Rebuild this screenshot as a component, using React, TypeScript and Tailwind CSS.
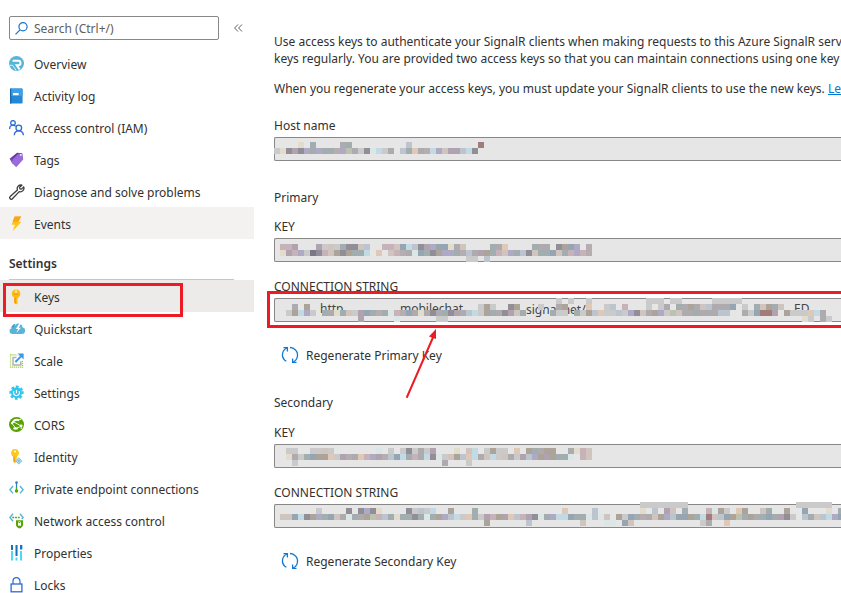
import type { ReactNode } from "react";

const palette: Record<string, string> = {
  a: "#b5adb0",
  b: "#adabad",
  c: "#cacacb",
  d: "#928e98",
  e: "#b1a2af",
  f: "#aea9c4",
  g: "#a2adaf",
  h: "#bcc4d0",
  i: "#c1dae4",
  j: "#dbe6e6",
  k: "#e1dccb",
  l: "#dfc9b6",
  m: "#d0c4be",
  n: "#96a5b2",
  o: "#bcc2ae",
  p: "#aca499",
  q: "#a17c7b",
  r: "#c8b2b9",
  s: "#7b7788",
};

type Row = { y: number; col: number; cells: string };
type Fragment = { x: number; y: number; text: string };

/* Pixelated strip that hides the value of a field; cells are 6px squares. */
function Mosaic({ rows, fragments = [] }: { rows: Row[]; fragments?: Fragment[] }) {
  return (
    <svg
      className="pointer-events-none absolute -top-1 left-0 h-8 w-[567px] max-w-none"
      viewBox="0 -4 567 32"
      aria-hidden="true"
    >
      {fragments.map((f) => (
        <text key={f.text} x={f.x} y={f.y} fontSize="12" fill="#444">
          {f.text}
        </text>
      ))}
      {rows.map((row) =>
        row.cells.split("").map((c, i) =>
          c === "." ? null : (
            <rect
              key={`${row.y}-${row.col + i}`}
              x={(row.col - 2 + i) * 6}
              y={row.y}
              width="6"
              height="6"
              fill={palette[c]}
              shapeRendering="crispEdges"
            />
          ),
        ),
      )}
    </svg>
  );
}

const hostRows: Row[] = [
  { y: 5, col: 2, cells: "....k.g....bg.........h...........q" },
  { y: 11, col: 2, cells: "ckdedfgfggafobcdjicb.hglbaifmeehid" },
];

const primaryKeyRows: Row[] = [
  { y: 6, col: 3, cells: "rre...ecmcgddmh..rrmnihdefnnkbm....gbl....gbb.dpnf.a" },
  { y: 12, col: 3, cells: "kerfcsdrmpdpggi.l.mrabjngdpffgahbepgrmfghdmggnmgrfra" },
  { y: 18, col: 34, cells: "cc.h" },
];

const primaryConnRows: Row[] = [
  { y: 0, col: 49, cells: "c.c..c.........ccc.cc.....ccccc" },
  { y: 6, col: 5, cells: "b.p............................cpc..dp...c..bp...l..ch.r...c.cb.gbpbmhbbbn.c.gmpgm" },
  { y: 12, col: 4, cells: "cpifc.gbkgmcengagjranbkbdbgdebhicpgbdemg....gcc.gcphlcchcfdmbpfcombbgbbbhh..bcnqqe.pccclib" },
  { y: 18, col: 90, cells: "kc.bc" },
  { y: 18, col: 16, cells: "e.....j......cc" },
];

const secondaryKeyRows: Row[] = [
  { y: 4, col: 4, cells: "cc..ccmc.......j.c.cdcbce...k.mi.cpcc.l.pgbpp..bkrm" },
  { y: 10, col: 4, cells: "kbcgnpplceablrfeahnigrbidjcmphlibmicmbcehfpepggj.rm" },
  { y: 16, col: 5, cells: "c........................b...c" },
];

const secondaryConnRows: Row[] = [
  { y: -2, col: 63, cells: "cccccccc..................cccccc" },
  { y: 4, col: 9, cells: "c....d.dfdk....dchci..p...g..............l....h.......k.h.em.g...rjpc.lp..mg..p..n...k.g" },
  {
    y: 10,
    col: 3,
    cells: "mmnidpfgnmbjgbporhgkggdgjgpfhiclgcerpelhredjgfiinggjhjm.pcngabmpfhnnpgiqmhnpogpbgngedc.hgmhifn",
  },
  { y: 16, col: 37, cells: "p......h........m...jj.nm...........cb..l" },
];

function SidebarIcon({ children }: { children: ReactNode }) {
  return (
    <svg viewBox="0 0 16 16" className="size-4 shrink-0" fill="none" aria-hidden="true">
      {children}
    </svg>
  );
}

const icons: Record<string, ReactNode> = {
  Overview: (
    <>
      <circle cx="7.5" cy="7.5" r="7.5" fill="#59b4d9" />
      <path d="M3.600 4.700h5.600a2.300 2.300 0 0 1 0 4.600H7.600l3 4.200" stroke="#fff" strokeWidth="1.900" />
      <path d="M.4 9.300h3.200l3.600 5.200" stroke="#fff" strokeWidth=".8" />
    </>
  ),
  "Activity log": (
    <>
      <rect x="1" y="0.5" width="12.6" height="15" rx="1" fill="#2488d8" />
      <rect x="1" y="0.5" width="1.4" height="15" fill="#1668b0" />
      <path d="M2.400.5h10.200a1 1 0 0 1 1 1V8H2.400z" fill="#3f9fe6" />
      <rect x="4" y="5" width="5.6" height="2.2" fill="#fff" />
    </>
  ),
  "Access control (IAM)": (
    <g stroke="#2a6bd4" strokeWidth="1.3">
      <circle cx="4" cy="2.9" r="2.3" />
      <path d="M0.600 9c0-2.300 1.400-3.800 3.400-3.800 1.200 0 2 .4 2.600 1.100" />
      <circle cx="9.8" cy="8" r="2.8" />
      <path d="M5.200 15.200c.2-2.700 1.800-4.400 4.600-4.400s4.400 1.700 4.600 4.400" />
    </g>
  ),
  Tags: (
    <>
      <path d="M.7 6.800 8 .8l5.400.5L5 12z" fill="#6a35ad" />
      <path d="M3.200 7.800 9.600 1.600l4 .2.6 5.800-7 7.600-4-4z" fill="#9b6ad8" />
      <path d="M.7 6.800 3.200 7.300v4.200z" fill="#8250c4" />
      <circle cx="11.8" cy="2.9" r=".9" fill="#fff" />
    </>
  ),
  "Diagnose and solve problems": (
    <path
      d="M11.700 1a3.600 3.600 0 0 0-3.300 4.900L1.200 12.600a1.500 1.500 0 0 0 2.200 2.200L10.200 7.600a3.600 3.600 0 0 0 4.500-4.700l-2.300 2.200-1.500-.3-.3-1.500L12.900 1.200A3.600 3.600 0 0 0 11.700 1z"
      stroke="#3b3b3b"
      strokeWidth="1.3"
      strokeLinejoin="round"
    />
  ),
  Events: (
    <>
      <path d="M5.600.5h6.600L9.400 5.800h3L3.600 15.300 6 8.800H2.600z" fill="#fcc419" />
      <path d="M5.600.5h6.600L9.400 5.800H3.700z" fill="#f9a420" />
    </>
  ),
  Keys: (
    <>
      <path d="M7 .4a4.300 4.300 0 0 1 2 8.100v1.300l-1.100 1 1.100 1-1 1 1 1L7.300 15.400 5.300 14V8.600A4.300 4.300 0 0 1 7 .4z" fill="#fbbc13" />
      <path d="M5.300 8.600h1.600v6.200L5.300 14z" fill="#f59b14" />
      <circle cx="7" cy="2.7" r="1.1" fill="#fff3c4" />
      <path d="M4.700 5.300h4.600" stroke="#e8960c" strokeWidth=".8" />
    </>
  ),
  Quickstart: (
    <>
      <path d="M3.200 13A3 3 0 0 1 2.500 7.200 3.400 3.400 0 0 1 6 4.600 4 4 0 0 1 13.500 6.600 3.200 3.200 0 0 1 12.300 13z" fill="#59b4d9" />
      <path d="M10.200 2.600 6.800 7.900h2.300L7.300 12l4.600-5.300H9.700l2.500-4.100z" fill="#fff" />
      <path d="M1.800 6.800 4.500 3.300 6.500 3 4.600 6.200z" fill="#3d9cc7" />
    </>
  ),
  Scale: (
    <>
      <rect x="1.5" y="1.8" width="12" height="12.4" stroke="#9bcb3c" strokeWidth="1.2" strokeDasharray="1.2 .8" />
      <path d="M7.500 1h6.500v6.500" stroke="#fff" strokeWidth="2" />
      <path d="M7.500 4.400H4V12h7.800V8.300" stroke="#b0b2b5" strokeWidth="1.5" />
      <path d="M8.600.5h6v6z" fill="#3999e8" />
      <path d="m6.400 9 5.600-5.600" stroke="#3999e8" strokeWidth="2" />
    </>
  ),
  Settings: (
    <>
      <circle cx="7.5" cy="7.7" r="5.5" fill="#32c5ee" />
      <circle
        cx="7.5"
        cy="7.7"
        r="6"
        stroke="#32c5ee"
        strokeWidth="2.3"
        strokeDasharray="2.7 2.012"
        transform="rotate(-13 7.5 7.7)"
      />
      <path d="M4.800 6.300a3 3 0 1 0 5.400 0" stroke="#fff" strokeWidth="1.2" />
      <path d="M7.500 5v3.200" stroke="#fff" strokeWidth="1.2" />
    </>
  ),
  CORS: (
    <>
      <circle cx="7.5" cy="7.5" r="7.5" fill="#57a300" />
      <path
        d="M4 4.500 12.200 9M12.200 9 6.500 12M3 6.500l4 5M8.600 3.500l3.800-1.400M12.200 9v3"
        stroke="#fff"
        strokeWidth=".9"
      />
      <path d="M3.600 5.600C5 3 7.500 2.300 10 3.200" stroke="#fff" strokeWidth="2" />
      <circle cx="12.2" cy="8.8" r="1.4" fill="#fff" />
      <circle cx="3.200" cy="6" r="1.2" fill="#fff" />
      <ellipse cx="6.6" cy="11.4" rx="2.4" ry="1.2" fill="#fff" />
    </>
  ),
  Identity: (
    <>
      <path d="M6 0a4 4 0 0 1 2.200 7.300V9l-1 .9 1 1-1 1 .5 1L6.200 14 4.400 12.500V7.600A4 4 0 0 1 6 0z" fill="#fcc81e" />
      <path d="M4.400 7.300H6V14L4.400 12.500z" fill="#f2a60d" />
      <circle cx="6" cy="2.4" r="1" fill="#fff" />
      <path d="m9.800 8.300 3.600 3.600-3.600 3.600-3.600-3.600z" fill="#7fc0dd" />
      <path d="m9.800 9.800 2 2-2 2-2-2z" stroke="#d9f0fa" strokeWidth=".7" />
    </>
  ),
  "Private endpoint connections": (
    <>
      <path d="M4 5 .9 8.700 4 12.400M11 5l3.100 3.700L11 12.400" stroke="#59b4d9" strokeWidth="1.4" />
      <path d="M7.500 1.500V10" stroke="#2a7fc1" strokeWidth="1.2" />
      <circle cx="7.5" cy="1.6" r="1.3" fill="#2a7fc1" />
      <circle cx="7.5" cy="10" r="1.7" fill="#57a300" />
      <path d="M7.500 6v4" stroke="#57a300" strokeWidth="1.2" />
    </>
  ),
  "Network access control": (
    <>
      <path d="M4 .8.900 4.500 4 8.200M11 .8l3.100 3.700L12.700 6" stroke="#59b4d9" strokeWidth="1.4" />
      <path d="M3.300 4.500h8.400" stroke="#57a300" strokeWidth="1.6" strokeDasharray="1.8 1" />
      <path d="M7 7.300h7v4.400c0 2-1.600 3.100-3.500 3.700C8.600 14.800 7 13.700 7 11.700z" fill="#57a300" />
      <rect x="9" y="10" width="3" height="2.7" fill="#fff" />
      <path d="M9.500 10v-.6a1 1 0 0 1 2 0v.6" stroke="#fff" strokeWidth=".7" />
    </>
  ),
  Properties: (
    <>
      <path d="M2 0h2v5H2zM6.500 0h2v11h-2zM11 0h2v4.500h-2z" fill="#1572c0" />
      <path d="M2 6h2v9.500H2zM6.500 12.500h2v3h-2zM11 6h2v9.500h-2z" fill="#4fd8f5" />
      <path d="M8.500 0H9v11h-.5zM13 0h.5v4.500H13z" fill="#5ab0e8" />
    </>
  ),
  Locks: (
    <>
      <rect x="2.1" y="7" width="10.8" height="7.8" stroke="#2a6bd4" strokeWidth="1.3" />
      <path d="M4 7V4.200a3.500 3.500 0 0 1 7 0V7" stroke="#2a6bd4" strokeWidth="1.2" />
    </>
  ),
};

function NavItem({ label, className = "", marked = false }: { label: string; className?: string; marked?: boolean }) {
  return (
    <li className="relative">
      <a href="#" className={`flex h-8 items-center gap-[9px] pt-0.5 pl-[9px] ${className}`}>
        <SidebarIcon>{icons[label]}</SidebarIcon>
        <span>{label}</span>
      </a>
      {marked && (
        <span className="absolute top-[3px] left-[3px] h-[34px] w-[180px] border-3 border-[#ed1c24]" />
      )}
    </li>
  );
}

const general = [
  "Overview",
  "Activity log",
  "Access control (IAM)",
  "Tags",
  "Diagnose and solve problems",
];

const settings = [
  "Quickstart",
  "Scale",
  "Settings",
  "CORS",
  "Identity",
  "Private endpoint connections",
  "Network access control",
  "Properties",
  "Locks",
];

function Field({
  id,
  label,
  rows,
  fragments,
  children,
}: {
  id: string;
  label: string;
  rows: Row[];
  fragments?: Fragment[];
  children?: ReactNode;
}) {
  return (
    <div>
      <label htmlFor={id} className="block h-5 leading-[18px]">
        {label}
      </label>
      <div className="relative">
        <input
          id={id}
          readOnly
          className="block h-6 w-full rounded-l-xs border border-r-0 border-[#8a8886] bg-[#e6e6e6] px-2 outline-none"
        />
        <Mosaic rows={rows} fragments={fragments} />
        {children}
      </div>
    </div>
  );
}

function RegenerateButton({ children }: { children: ReactNode }) {
  return (
    <button type="button" className="flex h-6 items-center gap-[7px] pl-[7px]">
      <svg viewBox="0 0 18 18" className="size-[18px]" fill="none" stroke="#0f7ad5" strokeWidth="1.3" aria-hidden="true">
        <path d="M6 2A7.400 7.400 0 0 0 3.800 14.200l1.600 1" />
        <path d="M2.500 1.600h3.900v4" />
        <path d="M12 16A7.400 7.400 0 0 0 14.200 3.800L12 2.200 9 1.500" />
        <path d="M15.500 16.400h-3.900v-4" />
      </svg>
      <span>{children}</span>
    </button>
  );
}

export default function App() {
  return (
    <div className="flex h-screen overflow-hidden bg-white font-['Noto_Sans','Open_Sans',sans-serif] text-xs leading-[17px] text-[#323130]">
      <aside className="w-[254px] shrink-0 pt-4">
        <div className="flex h-[31px] items-start pl-[9px]">
          <label className="flex h-6 w-[210px] items-center gap-[6px] rounded-xs border border-[#8a8886] pl-[5px]">
            <svg viewBox="0 0 13 13" className="size-[13px] shrink-0" fill="none" stroke="#1a73c8" strokeWidth="1.2" aria-hidden="true">
              <circle cx="8" cy="4.8" r="4.1" />
              <path d="M5 7.800.5 12.300" />
            </svg>
            <input
              type="search"
              aria-label="Search"
              placeholder="Search (Ctrl+/)"
              className="w-full min-w-0 bg-transparent outline-none placeholder:text-[#605e5c]"
            />
          </label>
          <button type="button" aria-label="Collapse menu" className="ml-[15px] flex h-6 items-center">
            <svg viewBox="0 0 9 8" className="h-2 w-[9px]" fill="none" stroke="#605e5c" aria-hidden="true">
              <path d="M4 .5.600 4 4 7.500M8 .5 4.600 4 8 7.500" />
            </svg>
          </button>
        </div>
        <nav>
          <ul>
            {general.map((label) => (
              <NavItem key={label} label={label} />
            ))}
            <NavItem label="Events" className="bg-[#f3f2f1]" />
          </ul>
          <h2 className="mr-5 ml-[9px] h-[41px] border-b border-[#c8c6c4] pt-4 font-semibold">Settings</h2>
          <ul>
            <NavItem label="Keys" className="bg-[#edebe9]" marked />
            {settings.map((label) => (
              <NavItem key={label} label={label} />
            ))}
          </ul>
        </nav>
      </aside>

      <main className="min-w-0 flex-1 overflow-hidden pt-[33px] pl-5">
        <p className="whitespace-nowrap">
          Use access keys to authenticate your SignalR clients when making requests to this Azure SignalR service
          <br />
          keys regularly. You are provided two access keys so that you can maintain connections using one key
        </p>
        <p className="mt-[13px] whitespace-nowrap">
          When you regenerate your access keys, you must update your SignalR clients to use the new keys.{" "}
          <a href="#" className="text-[#0078d4] underline">
            Learn more
          </a>
        </p>

        <div className="mt-5">
          <Field id="host" label="Host name" rows={hostRows} />
        </div>

        <section className="mt-7">
          <h2 className="h-[29px]">Primary</h2>
          <Field id="primary-key" label="KEY" rows={primaryKeyRows} />
          <div className="mt-4">
            <Field
              id="primary-connection"
              label="CONNECTION STRING"
              rows={primaryConnRows}
              fragments={[
                { x: 46, y: 15, text: "http" },
                { x: 126, y: 15, text: "mobilechat" },
                { x: 252, y: 16, text: "signal.net/" },
                { x: 520, y: 15, text: "ED" },
              ]}
            >
              <svg
                className="pointer-events-none absolute -top-[7px] -left-[7px] h-[110px] w-[600px] max-w-none"
                viewBox="0 0 600 110"
                fill="none"
                aria-hidden="true"
              >
                <path d="M600 1.500H1.500v34H600" stroke="#ed1c24" strokeWidth="3" />
                <path d="m140 106 27.500-63" stroke="#ed1c24" strokeWidth="2" strokeLinecap="round" />
                <path d="m169 38-7 7.500 7 2.500z" fill="#ed1c24" />
              </svg>
            </Field>
          </div>
          <div className="mt-[21px]">
            <RegenerateButton>Regenerate Primary Key</RegenerateButton>
          </div>
        </section>

        <section className="mt-[27px]">
          <h2 className="h-[30px]">Secondary</h2>
          <Field id="secondary-key" label="KEY" rows={secondaryKeyRows} />
          <div className="mt-4">
            <Field id="secondary-connection" label="CONNECTION STRING" rows={secondaryConnRows} />
          </div>
          <div className="mt-[21px]">
            <RegenerateButton>Regenerate Secondary Key</RegenerateButton>
          </div>
        </section>
      </main>
    </div>
  );
}
